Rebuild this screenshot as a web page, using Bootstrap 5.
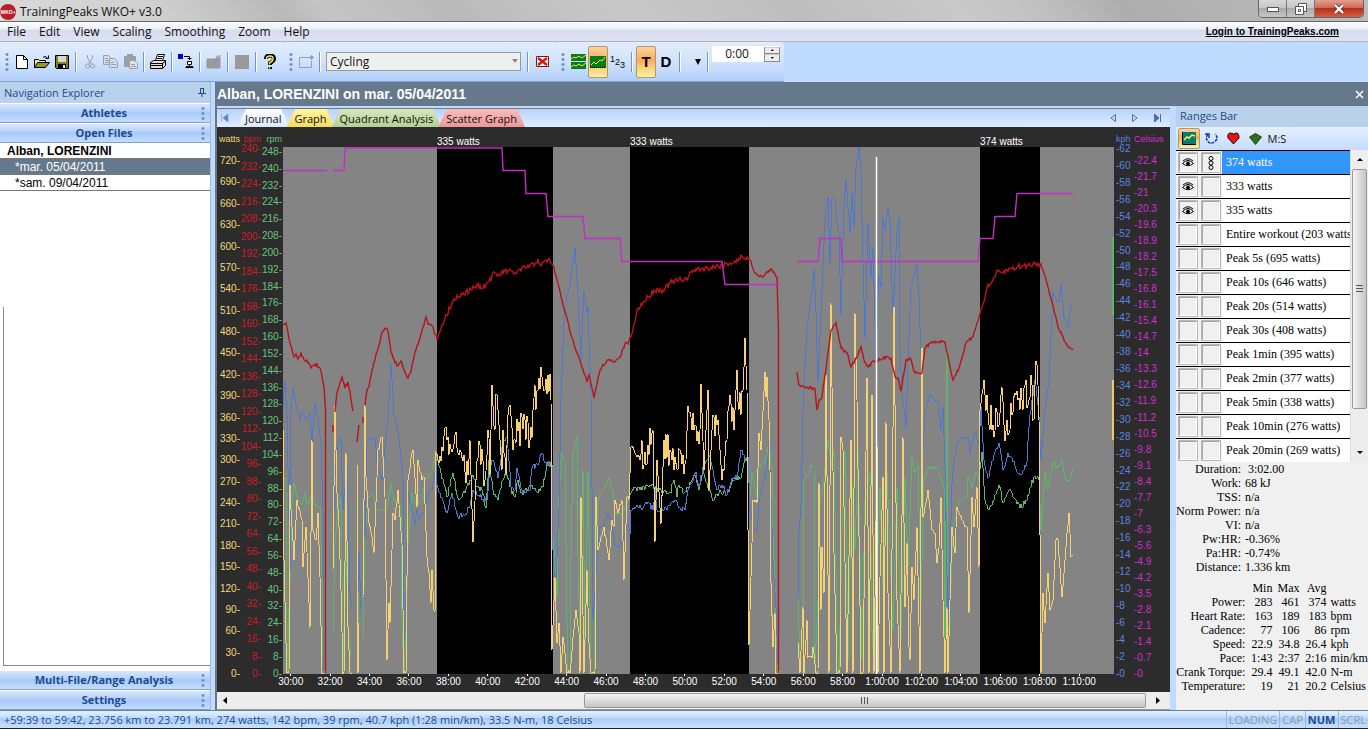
<!DOCTYPE html>
<html lang="en">
<head>
<meta charset="utf-8">
<meta name="viewport" content="width=device-width, initial-scale=1">
<title>TrainingPeaks WKO+ v3.0</title>
<link href="https://cdn.jsdelivr.net/npm/bootstrap@5.3.0/dist/css/bootstrap.min.css" rel="stylesheet">
<style>
  :root {
    --ui: "Open Sans", "Noto Sans", sans-serif;
    --plain: "Liberation Sans", Arial, sans-serif;
    --serif: "Liberation Serif", "Times New Roman", serif;
    --slate: #66788b;
    --navy: #1b4b8f;
    --band: linear-gradient(#e2edfd, #d3e4fc 45%, #b3d0fb);
  }
  body { font: 12px/16px var(--ui); color: #111; background: #bfdbff; height: 100vh; min-height: 600px; overflow: hidden; }
  button, select, input { font: inherit; color: inherit; border: 0; padding: 0; background: none; border-radius: 0; }
  svg { display: block; flex: none; }

  /* title bar */
  .titlebar { height: 22px; flex: none; background: linear-gradient(50deg, #d9d9d9 0, #cfcfcf 12%, #b9b9b9 21%, #c4c4c4 24%, #bababa 33%, #c8c8c8 46%, #bdbdbd 58%, #c9c9c9 70%, #c0c0c0 76%, #adadad 82%, #bcbcbc); border-bottom: 1px solid #666; }
  .logo-dot { font: bold 5px/16px var(--plain); color: #fff; background: #b81f28; width: 16px; height: 16px; border-radius: 50%; text-align: center; }
  .winbtns { border: 1px solid #666; border-top: 0; border-radius: 0 0 5px 5px; overflow: hidden; height: 18px; margin-right: 4px; }
  .winbtns button { width: 28px; display: grid; place-items: center; background: linear-gradient(#d8d8d8, #c6c6c6 45%, #a9a9a9 50%, #c8c8c8); border-right: 1px solid #777; }
  .winbtns .quit { width: 48px; border: 0; background: linear-gradient(#e0a091, #cf6a53 45%, #b9301a 50%, #cf6145); }

  /* menu */
  .menubar { height: 20px; flex: none; background: linear-gradient(#fbfcfe, #eef1f9 35%, #d6dcef 45%, #dde2f2); border-bottom: 1px solid #b0b4c0; }
  .menubar button { padding: 0 6px 0 7px; }
  .login { font: bold 10px/14px var(--plain); color: #000; margin-right: 29px; }

  /* toolbar */
  .toolbar { height: 40px; flex: none; }
  .tband { background: var(--band); border-bottom: 1px solid #7fa3d4; border-radius: 0 4px 0 0; padding-right: 4px; }
  .grip { width: 12px; height: 20px; background: radial-gradient(circle, #6f93c6 1px, transparent 2px) 5px 0 / 4px 5px repeat-y; }
  .tool { width: 20px; height: 32px; display: grid; place-items: center; }
  .tool.on { background: linear-gradient(#fbd49d, #fba95a 45%, #fdc56c 60%, #fef0a4); border: 1px solid #ad9a6c; border-radius: 2px; }
  .tsep { width: 8px; height: 20px; background: linear-gradient(90deg, transparent 3px, #6f97cf 3px, #6f97cf 4px, #fff 4px, #fff 5px, transparent 5px); }
  .letter { font: bold 15px/16px var(--plain); color: #000; }
  .sport { width: 195px; height: 19px; margin: 0 3px 0 2px; padding: 0 3px; background: #eeefef; border: 1px solid #9a9a9a; appearance: none; }
  .sportbox { position: relative; }
  .sportbox svg { position: absolute; right: 6px; top: 7px; pointer-events: none; }
  .smooth { background: #fff; height: 16px; width: 68px; align-self: flex-start; margin-top: 4px; }
  .smooth input { width: 50px; text-align: center; line-height: 16px; height: 16px; }
  .spin { width: 16px; height: 15px; }
  .spin button { height: 8px; background: #eee; border: 1px solid #888; border-top-color: #ccc; display: grid; place-items: center; }

  /* navigation explorer */
  .explorer { width: 211px; flex: none; border-right: 1px solid #9fbbe0; }
  .pane-title { background: #bad1ec; color: var(--navy); font-size: 11px; line-height: 20px; height: 21px; padding: 0 4px; flex: none; }
  .bar-btn { height: 20px; flex: none; font-weight: bold; color: var(--navy); border-top: 1px solid #fff; border-bottom: 1px solid #7da2ce; background: linear-gradient(#d8e6fb, #b6d2fa 40%, #a9caf8 50%, #c3dcfd); width: 100%; padding: 0 3px 0 7px; font-size: 11px; line-height: 16px; }
  .bar-btn .grip { width: 6px; height: 14px; background-position: 0 0; }
  .files { font: 12px/16px var(--plain); background: #fff; }
  .files a { height: 16px; border-bottom: 1px solid #777; color: #000; text-decoration: none; padding-left: 15px; display: block; }
  .files .who { font-weight: bold; font-size: 12px; padding-left: 7px; }
  .files .sel { background: var(--slate); color: #fff; }
  .empty-top { height: 116px; background: #fff; flex: none; }
  .empty-box { background: #fff; border: solid #888; border-width: 0 0 1px 1px; margin: 0 0 4px 3px; }

  /* document */
  .doc-title { height: 24px; flex: none; background: var(--slate); color: #fff; font: bold 14px/24px var(--plain); padding: 0 4px 0 2px; }
  .tabs { height: 19px; margin-top: 2px; flex: none; background: linear-gradient(#b7d3fa, #dfecfe); border-top: 1px solid #777; font-size: 11px; }
  .tabs .tab { height: 18px; line-height: 17px; padding: 0 8px; margin-right: -3px; clip-path: polygon(9px 0, calc(100% - 8px) 0, 100% 100%, 0 100%); background: linear-gradient(#fff, #d9e8fd); }
  .tabs .t-graph { background: linear-gradient(#fff6a0, #f7db5c); }
  .tabs .t-quad { background: linear-gradient(#d6e8bd, #b4d093); }
  .tabs .t-scat { background: linear-gradient(#f7bcbc, #ee9797); }

  .chart { background: #2c2c2c; display: grid; grid-template: 20px minmax(0, 1fr) 18px / 24px 21px 21px minmax(0, 1fr) 20px 36px; font: 10px/10px var(--plain); color: #fff; }
  .chart .hd { font-size: 9px; padding-top: 7px; white-space: nowrap; }
  .scale { display: flex; flex-direction: column; justify-content: space-between; margin: -3px 0 -5px; list-style: none; padding: 0; white-space: nowrap; }
  .scale.low { margin-top: 9px; }
  .scale.c-r { margin-top: 0; }
  .c-w { color: #f6d878; } .c-b { color: #d01c24; } .c-r { color: #6cc47c; } .c-k { color: #5b86e0; } .c-c { color: #cf30d0; }
  .ends { text-align: right; padding-right: 1px; }
  .starts { padding-left: 2px; }
  .marks { display: grid; grid-template-columns: 154fr 193fr 350fr 134fr; padding-top: 9px; line-height: 11px; }
  .marks span:first-child { grid-column: 2; }
  .times { grid-column: 4; display: flex; margin: 0 15px 0 -12px; padding: 0; list-style: none; }
  .times li { flex: 1 1 0; min-width: 0; display: flex; flex-direction: column; align-items: center; line-height: 12px; white-space: nowrap; }
  .times li::before { content: ""; width: 1px; height: 2px; background: #fff; flex: none; }
  .plot { width: 100%; height: 100%; background: #848484; overflow: hidden; }
  .plot path { fill: none; vector-effect: non-scaling-stroke; }
  .plot .jagged { shape-rendering: crispEdges; }

  .hbar { height: 18px; flex: none; background: #ededed; border-bottom: 1px solid #999; }
  .hthumb { width: 59%; border: 1px solid #999; border-radius: 2px; margin: 1px 0; background: linear-gradient(#f4f4f4, #dcdcdc 50%, #c6c6c6); display: grid; place-items: center; }
  .arrow { width: 16px; display: grid; place-items: center; }

  /* ranges */
  .ranges { width: 192px; flex: none; background: #f0f0f0; margin-left: 6px; }
  .rtools { height: 23px; flex: none; background: linear-gradient(#e6f0fe, #c4dcfc); padding: 0 2px; font-size: 11px; }
  .rtools .tool { width: 22px; height: 21px; }
  .rlist { height: 312px; flex: none; }
  .rrow { height: 24px; border-top: 1px solid #000; font: 12px/22px var(--serif); color: #000; background: #fff; white-space: nowrap; overflow: hidden; }
  .rrow button { width: 18px; height: 19px; margin: 2px 2px 0 3px; border: 1px solid #fff; border-top-color: #a4a4a4; border-left-color: #a4a4a4; outline: 1px solid #b8b8b8; background: #f0f0f0; display: grid; place-items: center; flex: none; }
  .rrow .cells { background: #f0f0f0; width: 46px; flex: none; }
  .rrow.cur .rname { background: #3196fb; color: #fff; }
  .rname { padding-left: 4px; flex: 1; min-width: 0; overflow: hidden; }
  .vbar { width: 18px; flex: none; background: #ededed; border-left: 1px solid #ddd; }
  .vthumb { height: 240px; border: 1px solid #999; border-radius: 2px; margin: 0 1px; background: linear-gradient(90deg, #f4f4f4, #dcdcdc 50%, #c6c6c6); display: grid; place-items: center; }
  .stats { font: 12px/14px var(--serif); color: #000; }
  .stats td, .stats th { padding: 0; font-weight: normal; text-align: right; white-space: nowrap; }
  .stats td:last-child, .s1 td { text-align: left; padding-left: 4px; }
  .s1 th { width: 63px; }
  .s2 th:first-child { width: 68px; }
  .s2 td, .s2 thead th { width: 27px; }
  .s2 { margin-top: 7px; }

  .status { height: 19px; flex: none; border-top: 1px solid #5c8693; border-bottom: 1px solid #1b222e; background: linear-gradient(#e6f1ff, #c2dbfa 40%, #a9ccf8 45%, #cbe1fd); color: var(--navy); font-size: 11px; line-height: 17px; }
  .status .key { color: #8d99aa; border-left: 1px solid #9ab8e0; padding: 0 2px; }
  .status .key.lit { color: var(--navy); font-weight: bold; }
</style>
</head>
<body class="d-flex flex-column m-0">

<header class="titlebar d-flex align-items-start">
  <span class="logo-dot mt-1">WKO+</span>
  <span class="ps-1 pt-1">TrainingPeaks WKO+ v3.0</span>
  <div class="winbtns d-flex ms-auto">
    <button aria-label="Minimize"><svg width="12" height="6"><rect x=".5" y="1.500" width="11" height="4" fill="#fff" stroke="#555"/></svg></button>
    <button aria-label="Restore"><svg width="12" height="12" fill="#fff" stroke="#555"><path d="M3.500.5h8v8h-8z"/><path d="M.5 3.500h8v8h-8zM3.500 6.500h2v2h-2z"/></svg></button>
    <button class="quit" aria-label="Close"><svg width="12" height="10"><path d="M2 1l8 8M10 1l-8 8" stroke="#633" stroke-width="4"/><path d="M2 1l8 8M10 1l-8 8" stroke="#fff" stroke-width="2.400"/></svg></button>
  </div>
</header>

<nav class="menubar d-flex align-items-center">
  <button>File</button><button>Edit</button><button>View</button><button>Scaling</button><button>Smoothing</button><button>Zoom</button><button>Help</button>
  <a class="login ms-auto" href="#">Login to TrainingPeaks.com</a>
</nav>

<div class="toolbar d-flex">
  <div class="tband d-flex align-items-center">
    <span class="grip"></span>
    <button class="tool" aria-label="New"><svg width="12" height="14"><path d="M.5.5h7l4 4v9H.5zM7.500.5v4h4" fill="#fff" stroke="#000"/></svg></button>
    <button class="tool" aria-label="Open"><svg width="16" height="14"><path d="M.5 12.500v-8h4l1 1h6v2" fill="#ffe97a" stroke="#000"/><path d="M.5 12.500l3-5h12l-4 5z" fill="#9a9420" stroke="#000"/><path d="M9 2.500q2-2 4 0l1 1M14.500.5v3h-3" fill="none" stroke="#000"/></svg></button>
    <button class="tool" aria-label="Save"><svg width="14" height="14"><path d="M.5.5h13v13h-12l-1-1z" fill="#80801c" stroke="#000"/><path d="M3 1h8v6H3z" fill="#d8d8d8"/><path d="M3 9h8v5H3z"/><path d="M8 10h2v3H8z" fill="#fff"/></svg></button>
    <span class="tsep"></span>
    <button class="tool" aria-label="Cut"><svg width="10" height="14" fill="none" stroke="#9aa0a8"><path d="M2.500 0v3l4 6M7.500 0v3l-4 6"/><circle cx="2.500" cy="11" r="2"/><circle cx="7.500" cy="11" r="2"/></svg></button>
    <button class="tool" aria-label="Copy"><svg width="15" height="13" fill="#d4dbe6" stroke="#9aa0a8"><path d="M.5.5h5l3 3v6h-8zM2 3.500h3M2 5.500h4M2 7.500h4"/><path d="M6.500 3.500h5l3 3v6h-8zM8 7.500h3M8 9.500h5"/></svg></button>
    <button class="tool" aria-label="Paste"><svg width="15" height="15"><path d="M1 2h12v11H1zM4 0h6v3H4z" fill="#9aa0a8"/><path d="M6.500 6.500h5l3 3v5h-8zM8 10.500h4M8 12.500h5" fill="#dfe4ec" stroke="#9aa0a8"/></svg></button>
    <span class="tsep"></span>
    <button class="tool" aria-label="Print"><svg width="17" height="15"><path d="M5.500 6.500l2-6h7l-2 6M8 2.500h5M7 4.500h5" fill="#fff" stroke="#000"/><path d="M.5 8.500l3-2h12v5l-3 3H.5z" fill="#ddd" stroke="#000"/><path d="M1 9.500h11M1 11.500h12M12.500 9v5M13 9l3-2" stroke="#000"/></svg></button>
    <span class="tsep"></span>
    <button class="tool" aria-label="Transfer"><svg width="16" height="15"><path d="M0 0h5v5H0z" fill="#00c"/><path d="M6 2.500h5.500V6M9.500 4.500h4" fill="none" stroke="#000"/><path d="M9.500 7.500h4v3h-4zM7.500 13.500h8M8 12.500h7M11.500 11v2" stroke="#000" fill="#fff"/></svg></button>
    <span class="tsep"></span>
    <button class="tool" aria-label="Add folder"><svg width="16" height="14"><path d="M1 4h8l1-1h4v10H1zM10 1l4 3M14 0v3M12 0v3" fill="#9a9a9a" stroke="#9a9a9a"/></svg></button>
    <span class="tsep"></span>
    <button class="tool" aria-label="Stop"><svg width="14" height="14"><path d="M0 0h14v14H0z" fill="#9a9a9a"/></svg></button>
    <span class="tsep"></span>
    <button class="tool" aria-label="Help"><svg width="12" height="16" fill="none"><path d="M2 5q0-3.500 4-3.500T10 5q0 2-4 4v2M6 13v2" stroke="#000" stroke-width="4"/><path d="M2.500 5q0-3 3.500-3t3 3q0 2-3.500 4v1.500M5.500 13v1.500" stroke="#f6ea32" stroke-width="1.500"/></svg></button>
  </div>
  <div class="tband d-flex align-items-center">
    <span class="grip"></span>
    <button class="tool" aria-label="New range"><svg width="15" height="14" fill="none" stroke="#9aa0a8"><path d="M10 2.500H.5v10h12V6M12.500 0v5M10 2.500h5M11 1l3 3M14 1l-3 3"/></svg></button>
    <span class="tsep"></span>
    <div class="sportbox"><select class="sport" aria-label="Sport"><option>Cycling</option></select><svg width="6" height="4"><path d="M0 0h6L3 4z" fill="#888"/></svg></div>
    <span class="tsep"></span>
    <button class="tool" aria-label="Delete"><svg width="13" height="11"><path d="M.5.5h12v10H.5z" fill="#fff" stroke="#811"/><path d="M2 2l9 7M11 2L2 9" stroke="#d01818" stroke-width="2.500"/></svg></button>
  </div>
  <div class="tband d-flex align-items-center">
    <span class="grip"></span>
    <button class="tool" aria-label="Stacked graphs"><svg width="15" height="16"><path d="M0 0h15v7H0zM0 8h15v7H0z" fill="#0b7a18"/><path d="M0 5l3-2 2 1 3-2 3 2 4-3M0 13l3-2 2 1 3-2 3 2 4-3" fill="none" stroke="#e7ef4a"/></svg></button>
    <button class="tool on" aria-label="Single graph"><svg width="16" height="12"><path d="M0 0h16v12H0z" fill="#0b7a18"/><path d="M1 9l3-3 2 2 4-4 2 1 3-4" fill="none" stroke="#e7ef4a"/><path d="M0 11.500h16" stroke="#000" stroke-dasharray="1 1"/></svg></button>
    <button class="tool" aria-label="Numbers"><svg width="16" height="14" font-family="Liberation Sans" font-size="9"><text x="0" y="7">1</text><text x="5" y="10">2</text><text x="10" y="13">3</text></svg></button>
    <span class="tsep"></span>
    <button class="tool on letter">T</button>
    <button class="tool letter">D</button>
    <span class="tsep"></span>
    <button class="tool ps-2" aria-label="More"><svg width="6" height="6"><path d="M0 0h6L3 6z"/></svg></button>
    <span class="tsep"></span>
    <div class="smooth d-flex align-items-center justify-content-between">
      <input type="text" value="0:00" aria-label="Smoothing">
      <div class="spin d-flex flex-column"><button aria-label="Up"><svg width="3" height="2"><path d="M0 2h3L1 0z"/></svg></button><button aria-label="Down"><svg width="3" height="2"><path d="M0 0h3L1 2z"/></svg></button></div>
    </div>
  </div>
</div>

<div class="d-flex flex-grow-1" style="min-height:0">
  <aside class="explorer d-flex flex-column">
    <div class="pane-title d-flex align-items-center justify-content-between"><span>Navigation Explorer</span><svg width="8" height="9" fill="none" stroke="#1b4b8f"><path d="M2.500 5V.5h3V5M5.500 0v5M0 5.500h8M4 6v3"/></svg></div>
    <button class="bar-btn d-flex align-items-center"><span class="flex-grow-1">Athletes</span><span class="grip"></span></button>
    <button class="bar-btn d-flex align-items-center"><span class="flex-grow-1">Open Files</span><span class="grip"></span></button>
    <div class="files">
      <a class="who" href="#">Alban, LORENZINI</a>
      <a class="sel" href="#">*mar. 05/04/2011</a>
      <a href="#">*sam. 09/04/2011</a>
    </div>
    <div class="bg-white d-flex flex-column flex-grow-1">
      <div class="empty-top"></div>
      <div class="empty-box flex-grow-1"></div>
    </div>
    <button class="bar-btn d-flex align-items-center"><span class="flex-grow-1">Multi-File/Range Analysis</span><span class="grip"></span></button>
    <button class="bar-btn d-flex align-items-center"><span class="flex-grow-1">Settings</span><span class="grip"></span></button>
  </aside>

  <main class="d-flex flex-column flex-grow-1 ms-1" style="min-width:0">
    <div class="doc-title d-flex justify-content-between"><span>Alban, LORENZINI on mar. 05/04/2011</span><button aria-label="Close document"><svg width="9" height="9"><path d="M1 1l7 7M8 1L1 8" stroke="#fff" stroke-width="1.500"/></svg></button></div>
    <div class="d-flex flex-grow-1" style="min-height:0">
      <section class="d-flex flex-column flex-grow-1 border-start border-2 border-secondary" style="min-width:0">
        <div class="tabs d-flex align-items-center">
          <button class="px-1 me-1" aria-label="First tab"><svg width="8" height="8"><path d="M.5 0v8M7 0v8L2 4z" fill="#5c86bd" stroke="#5c86bd" stroke-width=".5"/></svg></button>
          <button class="tab">Journal</button><button class="tab t-graph">Graph</button><button class="tab t-quad">Quadrant Analysis</button><button class="tab t-scat">Scatter Graph</button>
          <span class="ms-auto d-flex gap-3 pe-2">
            <button aria-label="Previous"><svg width="6" height="8"><path d="M5.500.5v7L1 4z" fill="none" stroke="#4670a8"/></svg></button>
            <button aria-label="Next"><svg width="6" height="8"><path d="M.5.5v7L5 4z" fill="none" stroke="#4670a8"/></svg></button>
            <button aria-label="Last"><svg width="8" height="8"><path d="M.5 0v8L5 4zM6.500 0v8" fill="#4670a8" stroke="#4670a8"/></svg></button>
          </span>
        </div>

        <div class="chart flex-grow-1">
          <div class="hd c-w ends">watts</div><div class="hd c-b ends">bpm</div><div class="hd c-r ends">rpm</div>
          <div class="marks"><span>335 watts</span><span>333 watts</span><span>374 watts</span></div>
          <div class="hd c-k starts">kph</div><div class="hd c-c">Celsius</div>
          <ul class="scale low c-w ends" data-max="720" data-step="30" data-after="-"></ul>
          <ul class="scale c-b ends" data-max="240" data-step="8" data-after="-"></ul>
          <ul class="scale c-r ends" data-max="248" data-step="8" data-after="-"></ul>
          <svg class="plot" viewBox="283 147 831 527" preserveAspectRatio="none" role="img" aria-label="Workout graph">
            <path d="M437 147h116v527h-116zM630 147h119v527h-119zM980 147h60v527h-60z" style="fill:#000"/>
            <g id="traces"></g>
            <path d="M876.500 157v517" stroke="#fff" stroke-width="1.500"/>
            <path d="M1113 237v78" stroke="#58b868" stroke-width="2"/><path d="M1113 380v60" stroke="#f2ca62" stroke-width="2"/>
          </svg>
          <ul class="scale c-k starts" data-max="62" data-step="2" data-before="-"></ul>
          <ul class="scale low c-c" data-max="22.4" data-step="0.7" data-before="-"></ul>
          <ul class="times"></ul>
        </div>

        <div class="hbar d-flex">
          <button class="arrow" aria-label="Scroll left"><svg width="4" height="7"><path d="M4 0v7L0 3.500z"/></svg></button>
          <div class="flex-grow-1"></div>
          <div class="hthumb"><svg width="8" height="7"><path d="M.5 0v7M3.500 0v7M6.500 0v7" stroke="#555"/></svg></div>
          <button class="arrow ms-1" aria-label="Scroll right"><svg width="4" height="7"><path d="M0 0v7l4-3.500z"/></svg></button>
          <div class="ps-1"></div>
        </div>
      </section>

      <aside class="ranges d-flex flex-column">
        <div class="pane-title">Ranges Bar</div>
        <div class="rtools d-flex align-items-center">
          <button class="tool on" aria-label="Ranges"><svg width="14" height="13"><path d="M1 0h13v12H1z" fill="#0c7d6c"/><path d="M.5 0v12.500H14" fill="none" stroke="#000"/><path d="M2 8l3-3 2 1 3-3 3 1" fill="none" stroke="#f1f35a" stroke-width="1.500"/></svg></button>
          <button class="tool" aria-label="Laps"><svg width="13" height="13" fill="none" stroke="#1c2fae" stroke-width="1.500"><path d="M3 2Q0 6 3 9.500t7 0 0-7.500" stroke-dasharray="3 1"/><path d="M0 2h4v4"/></svg></button>
          <button class="tool" aria-label="Heart rate"><svg width="13" height="13"><path d="M6.500 12L1 6Q0 1 3.500 1T6.500 3Q7 1 9.500 1T12 6z" fill="#e21414" stroke="#300"/></svg></button>
          <button class="tool" aria-label="Power"><svg width="13" height="12"><path d="M.5 4L6.500.5l6 3.500-6 7.500z" fill="#2f6e1f" stroke="#241"/></svg></button>
          <button class="tool">M:S</button>
        </div>
        <div class="rlist d-flex">
          <div id="rangeRows" class="flex-grow-1 overflow-hidden"></div>
          <div class="vbar d-flex flex-column">
            <button class="py-2 d-flex justify-content-center" aria-label="Scroll up"><svg width="6" height="3"><path d="M0 3h6L3 0z"/></svg></button>
            <div class="vthumb"><svg width="7" height="8"><path d="M0 .5h7M0 3.500h7M0 6.500h7" stroke="#555"/></svg></div>
            <button class="pb-2 d-flex justify-content-center mt-auto" aria-label="Scroll down"><svg width="6" height="3"><path d="M0 0h6L3 3z"/></svg></button>
          </div>
        </div>
        <table class="stats s1">
          <tr><th>Duration:</th><td>&nbsp;3:02.00</td></tr>
          <tr><th>Work:</th><td>68 kJ</td></tr>
          <tr><th>TSS:</th><td>n/a</td></tr>
          <tr><th>Norm Power:</th><td>n/a</td></tr>
          <tr><th>VI:</th><td>n/a</td></tr>
          <tr><th>Pw:HR:</th><td>-0.36%</td></tr>
          <tr><th>Pa:HR:</th><td>-0.74%</td></tr>
          <tr><th>Distance:</th><td>1.336 km</td></tr>
        </table>
        <table class="stats s2">
          <thead><tr><th></th><th>Min</th><th>Max</th><th>Avg</th><td></td></tr></thead>
          <tbody>
          <tr><th>Power:</th><td>283</td><td>461</td><td>374</td><td>watts</td></tr>
          <tr><th>Heart Rate:</th><td>163</td><td>189</td><td>183</td><td>bpm</td></tr>
          <tr><th>Cadence:</th><td>77</td><td>106</td><td>86</td><td>rpm</td></tr>
          <tr><th>Speed:</th><td>22.9</td><td>34.8</td><td>26.4</td><td>kph</td></tr>
          <tr><th>Pace:</th><td>1:43</td><td>2:37</td><td>2:16</td><td>min/km</td></tr>
          <tr><th>Crank Torque:</th><td>29.4</td><td>49.1</td><td>42.0</td><td>N-m</td></tr>
          <tr><th>Temperature:</th><td>19</td><td>21</td><td>20.2</td><td>Celsius</td></tr>
          </tbody>
        </table>
      </aside>
    </div>
  </main>
</div>

<footer class="status d-flex">
  <span class="ps-1 flex-grow-1">+59:39 to 59:42, 23.756 km to 23.791 km, 274 watts, 142 bpm, 39 rpm, 40.7 kph (1:28 min/km), 33.5 N-m, 18 Celsius</span>
  <span class="key">LOADING</span><span class="key">CAP</span><span class="key lit">NUM</span><span class="key">SCRL</span>
</footer>

<script src="https://cdn.jsdelivr.net/npm/bootstrap@5.3.0/dist/js/bootstrap.bundle.min.js"></script>
<script>
  // axis labels
  document.querySelectorAll('.scale').forEach(ul => {
    const max = +ul.dataset.max, step = +ul.dataset.step, n = Math.round(max / step);
    for (let i = n; i >= 0; i--) {
      const li = document.createElement('li');
      li.textContent = (ul.dataset.before || '') + +(i * step).toFixed(1) + (ul.dataset.after || '');
      ul.append(li);
    }
  });
  const times = document.querySelector('.times');
  for (let m = 30; m <= 70; m += 2) {
    const li = document.createElement('li');
    li.append(m < 60 ? m + ':00' : '1:' + String(m - 60).padStart(2, '0') + ':00');
    times.append(li);
  }

  // range list
  const eye = '<svg width="12" height="10" fill="none" stroke="#000"><path d="M.5 5.500Q6-.5 11.500 5.500 6 10 .5 5.500M1 3Q6-1.500 11 3"/><circle cx="6" cy="5.500" r="1.500" fill="#000"/></svg>';
  const chain = '<svg width="8" height="14" fill="none" stroke="#000"><circle cx="4" cy="2.500" r="2"/><circle cx="4" cy="7" r="2"/><circle cx="4" cy="11.500" r="2"/></svg>';
  document.getElementById('rangeRows').innerHTML =
    ['374 watts', '333 watts', '335 watts', 'Entire workout (203 watts)', 'Peak 5s (695 watts)', 'Peak 10s (646 watts)',
     'Peak 20s (514 watts)', 'Peak 30s (408 watts)', 'Peak 1min (395 watts)', 'Peak 2min (377 watts)',
     'Peak 5min (338 watts)', 'Peak 10min (276 watts)', 'Peak 20min (269 watts)'].map((t, i) =>
      `<div class="rrow d-flex ${i ? '' : 'cur'}"><div class="cells d-flex"><button aria-label="Show ${t}">${i < 3 ? eye : ''}</button><button aria-label="Link ${t}">${i ? '' : chain}</button></div><div class="rname">${t}</div></div>`).join('');

  // traces: colour, jitter, class, then runs of "x,y" samples separated by "|"
  const trace = {
    cadence: ['#5fb56d', 3, 'jagged', `284,477 286,490 287,623 288,673 289,610 291,550 292,503 294,483 297,497 302,505 305,493 307,505 312,495 315,505 320,507 322,577 323,663|333,633 335,543 338,507 341,497 342,577 344,673 346,537 348,623 351,657|358,637 359,590|363,640 365,537 368,497 373,493 376,510 387,510 391,483 394,502 398,498 401,507 402,627 404,673 406,637 408,543 412,493 415,503 422,500 425,480 432,470 436,452 441,473 447,497 453,473 458,498 465,493 473,475 477,487 482,490 486,508 489,460 493,490 498,500 503,480 506,470 510,487 515,497 518,480 522,493 532,485 537,492 543,487 547,462 552,465 552,523 555,563 557,597 559,497 562,453 565,460 567,623 568,673 570,673 571,557 573,453 577,437 578,557 580,640 583,470 585,647 588,472 591,673 594,673 596,550 598,500 605,487 609,478 613,493 615,513 622,513 628,500 635,487 640,490 647,485 657,488 663,493 670,493 674,480 677,497 678,487 685,492 690,482 695,475 699,490 703,470 707,483 714,500 720,490 727,495 733,478 741,478 745,460 748,460 750,497 752,472 757,497 759,467 765,463 769,443 772,470 773,533 776,617 778,673|798,600 800,660 803,640 804,480 808,475 812,465 814,468 815,667 818,600 820,503 824,477 828,440 832,467 834,450 837,633 839,673 842,533 845,450 848,660 852,483 855,550 858,450 862,660 865,500 870,473 872,630 874,667 880,487 883,587 887,473 893,630 897,487 901,637 905,477 908,567 912,458 915,473 918,465 921,603 924,480 928,467 938,468 944,487 945,673 947,350 948,633 951,587 953,527 960,500 967,497 968,477 972,487 976,472 979,480 982,452 985,500 989,510 995,495 999,485 1003,503 1009,490 1013,497 1020,508 1027,500 1030,488 1034,477 1039,480 1041,530 1043,503 1045,473 1048,490 1053,462 1058,468 1062,460 1065,478 1069,482 1073,468`],
    speed: ['#5078d0', 3, 'jagged', `283,405 285,381 287,414 290,573 291,410 293,388 297,410 300,420 302,412 306,420 310,412 312,443 315,403 318,420 321,443 323,510 324,673 325,673|334,510 335,477 338,443 341,437 343,510 347,463 350,593 352,610|357,633 359,553 361,610|365,540 367,443 370,437 373,440 375,437 377,463 382,480 384,460 388,417 391,364 394,414 399,440 403,477 404,643 406,593 408,493 415,525 417,510 419,520 425,510 427,493 432,490 436,465 437,485 447,513 452,493 458,517 467,513 471,500 473,490 480,497 487,500 490,467 493,460 498,478 503,443 507,437 511,487 515,490 517,468 522,490 530,490 532,468 538,465 542,453 545,463 552,465 553,550 555,590 557,557 559,507 561,398 564,323 567,295 570,285 575,247 578,297 581,358 584,291 587,313 588,307 591,397 592,490 593,620 595,590 597,557 600,527 603,525 608,513 612,523 615,545 620,548 625,533 627,517 630,535 631,510 635,507 643,508 648,502 653,510 655,490 657,510 667,510 675,500 680,508 685,510 688,490 696,472 699,487 703,467 709,455 713,470 717,490 722,485 727,495 732,478 737,478 741,450 745,460 748,457 750,510 753,527 757,532 759,503 763,483 767,470 769,442 772,527 773,567 776,607 778,663|798,600 799,533 801,507 803,413 805,363 807,330 812,290 814,269 816,313 818,383 822,290 825,220 828,197 830,263 832,198 835,197 837,223 839,233 841,315 844,207 846,180 850,232 852,193 854,227 856,167 859,147 861,173 863,263 865,338 868,223 871,277 873,247 876,360 878,297 879,277 881,287 883,218 885,230 888,208 890,223 893,317 897,230 899,218 900,350 902,393 906,427 908,363 911,285 917,265 919,297 921,357 922,467 925,413 930,395 938,402 941,430 943,407 945,467 948,627 952,483 954,460 958,440 968,437 970,453 975,432 979,443 981,407 984,460 988,478 993,460 999,443 1003,470 1008,453 1012,458 1017,472 1021,475 1027,462 1029,427 1032,400 1035,380 1039,417 1041,460 1045,410 1049,380 1053,292 1057,302 1059,302 1061,284 1064,317 1069,327 1071,303 1073,304`],
    power: ['#f5d173', 18, 'jagged', `283,430 284,560 286,643 287,673 289,673 290,485 291,510 294,560 297,500 302,520 303,567 306,527 310,628 312,440 313,530 316,540 318,513 320,577 322,673 326,673|333,570 335,405 337,493 339,527 341,590 343,673 344,673 346,453 348,627 350,673 352,673|357,465 358,673 359,623|363,597 365,405 366,477 369,523 372,537 374,553 377,477 378,450 382,437 385,497 387,660 389,603 390,623 393,513 395,520 398,490 402,543 404,673 406,673 408,480 412,453 413,450 417,507 418,460 422,480 424,477 427,557 429,573 431,603 432,570 434,610 435,612 436,453 439,463 442,447 447,440 455,435 460,450 464,455 466,483 470,440 473,542 476,480 480,445 485,480 488,430 490,475 492,385 495,430 497,395 502,470 503,430 506,475 508,415 515,440 525,420 530,440 533,410 538,390 541,367 545,390 548,375 551,400 552,650 555,577 557,643 559,623 561,673 563,637 565,653 567,673 570,673 573,637 576,610 579,633 580,673 581,497 584,673 587,570 589,643 591,673 595,673 596,497 598,550 601,537 604,527 609,560 612,520 614,527 615,500 618,513 622,500 624,580 627,497 629,500 631,447 640,460 648,445 653,430 655,542 657,460 661,524 664,440 670,450 674,470 680,450 686,460 688,406 692,430 700,430 701,384 704,470 708,390 709,490 712,430 718,420 722,480 727,440 730,395 734,430 737,370 739,410 743,390 745,338 747,390 748,530 749,645 752,543 753,500 757,503 759,433 761,450 765,372 766,397 767,377 769,420 770,470 771,583 773,647 775,613 776,673 780,673|798,643 800,673 803,607 804,673 807,620 808,657 812,658 813,647 816,673 818,673 819,483 821,610 822,547 824,593 826,375 829,673 831,303 834,553 837,673 840,673 841,437 843,450 847,673 851,440 853,673 855,313 857,400 861,673 863,673 867,378 869,673 872,395 874,673 877,447 878,673 880,577 883,477 884,673 886,422 888,593 891,673 894,307 897,600 900,673 903,437 905,607 907,543 909,647 910,660 912,567 914,600 917,527 920,673 922,348 923,517 925,507 928,490 932,530 935,533 937,563 939,547 941,497 943,600 945,673 947,607 948,673 950,600 952,527 955,553 957,507 962,520 967,527 969,613 972,497 974,527 977,487 979,567 980,410 984,380 988,413 993,425 999,425 1001,395 1004,425 1008,435 1012,415 1016,395 1022,400 1026,380 1028,405 1031,375 1033,420 1035,385 1037,365 1038,385 1039,420 1040,535 1041,673 1043,593 1045,623 1048,573 1050,610 1053,600 1056,540 1058,540 1062,597 1065,560 1067,533 1069,513 1071,557 1073,555`],
    heart: ['#b8141c', 3, 'smoothed', `283,324 286,323 290,343 294,357 296,354 298,359 301,353 304,360 307,360 311,368 315,364 320,368 324,387 325.5,410 325.5,673|333,432 333,425|335,412 337,393 342,377 345,388 348,382 350,392 353,411|357,442 359,425|363,423 363,417|365,405 367,390 369,387 372,370 374,362 380,342 382,332 385,328 388,331 391,352 397,366 401,361 403,368 408,378 411,372 415,352 420,338 426,317 428,324 433,327 437,339 445,318 452,303 457,295 465,295 470,288 480,285 483,288 488,282 495,273 498,276 505,271 515,273 525,268 535,264 538,259 541,266 548,259 553,265 557,280 565,312 572,338 580,360 587,382 589,375 594,398 600,370 607,360 615,362 620,357 626,342 628,344 633,330 638,308 648,297 654,290 663,290 670,283 688,278 693,270 707,268 718,266 730,263 738,261 742,256 750,260 755,273 762,277 771,269 777,278 778.5,330 778.5,673|797,372 799,385 807,387 815,389 817,410 819,400 822,397 827,360 831,330 836,323 841,348 847,353 851,367 857,357 861,347 864,360 868,367 873,361 880,360 887,357 891,358 895,377 898,378 901,391 906,360 910,358 915,373 922,373 925,348 930,343 937,342 945,342 948,357 953,380 959,368 966,343 973,337 977,323 982,307 987,288 991,284 996,273 1003,273 1007,270 1017,267 1030,265 1035,263 1041,264 1047,283 1052,302 1058,327 1067,345 1073,350`],
    temperature: ['#c42ec6', 0, 'smoothed', `283,170.5 327,170.5|333,170.5 344,170.5 345,148 502,148 503,170.5 525,170.5 526,193.500 546,193.500 548,216.500 583,216.500 585,238.500 620,238.500 622,261.500 722,261.500 725,284.500 780,284.500|797,261.500 818,261.500 820,238.500 841,238.500 842,261.500 978,261.500 980,238.500 993,238.500 995,216.500 1015,216.500 1017,193.500 1073,193.500`]
  };
  let seed = 7;
  const rand = () => (seed = (seed * 16807) % 2147483647) / 2147483647 - 0.5;
  const steady = x => (x > 437 && x < 551) || (x > 631 && x < 747) || (x > 981 && x < 1038);
  // gentle stretches carry second-by-second jitter, steep ones stay straight
  const build = (text, amp) => text.split('|').map(run => {
    const pts = run.split(' ').map(p => p.split(',').map(Number));
    let d = 'M' + pts[0];
    for (let i = 1; i < pts.length; i++) {
      const [x0, y0] = pts[i - 1], [x1, y1] = pts[i];
      const a = steady(x0) ? amp * 2 : Math.min(amp, 5);
      if (amp && Math.abs(y1 - y0) < 60)
        for (let x = x0 + 1; x < x1; x += 1)
          d += 'L' + x + ' ' + Math.min(673, y0 + (y1 - y0) * (x - x0) / (x1 - x0) + rand() * a).toFixed(1);
      d += 'L' + x1 + ' ' + y1;
    }
    return d;
  }).join('');
  document.getElementById('traces').innerHTML = Object.values(trace)
    .map(([color, amp, kind, text]) => `<path class="${kind}" d="${build(text, amp)}" stroke="${color}" stroke-width="${kind === 'jagged' ? 1 : 1.4}"/>`).join('');
</script>
</body>
</html>
